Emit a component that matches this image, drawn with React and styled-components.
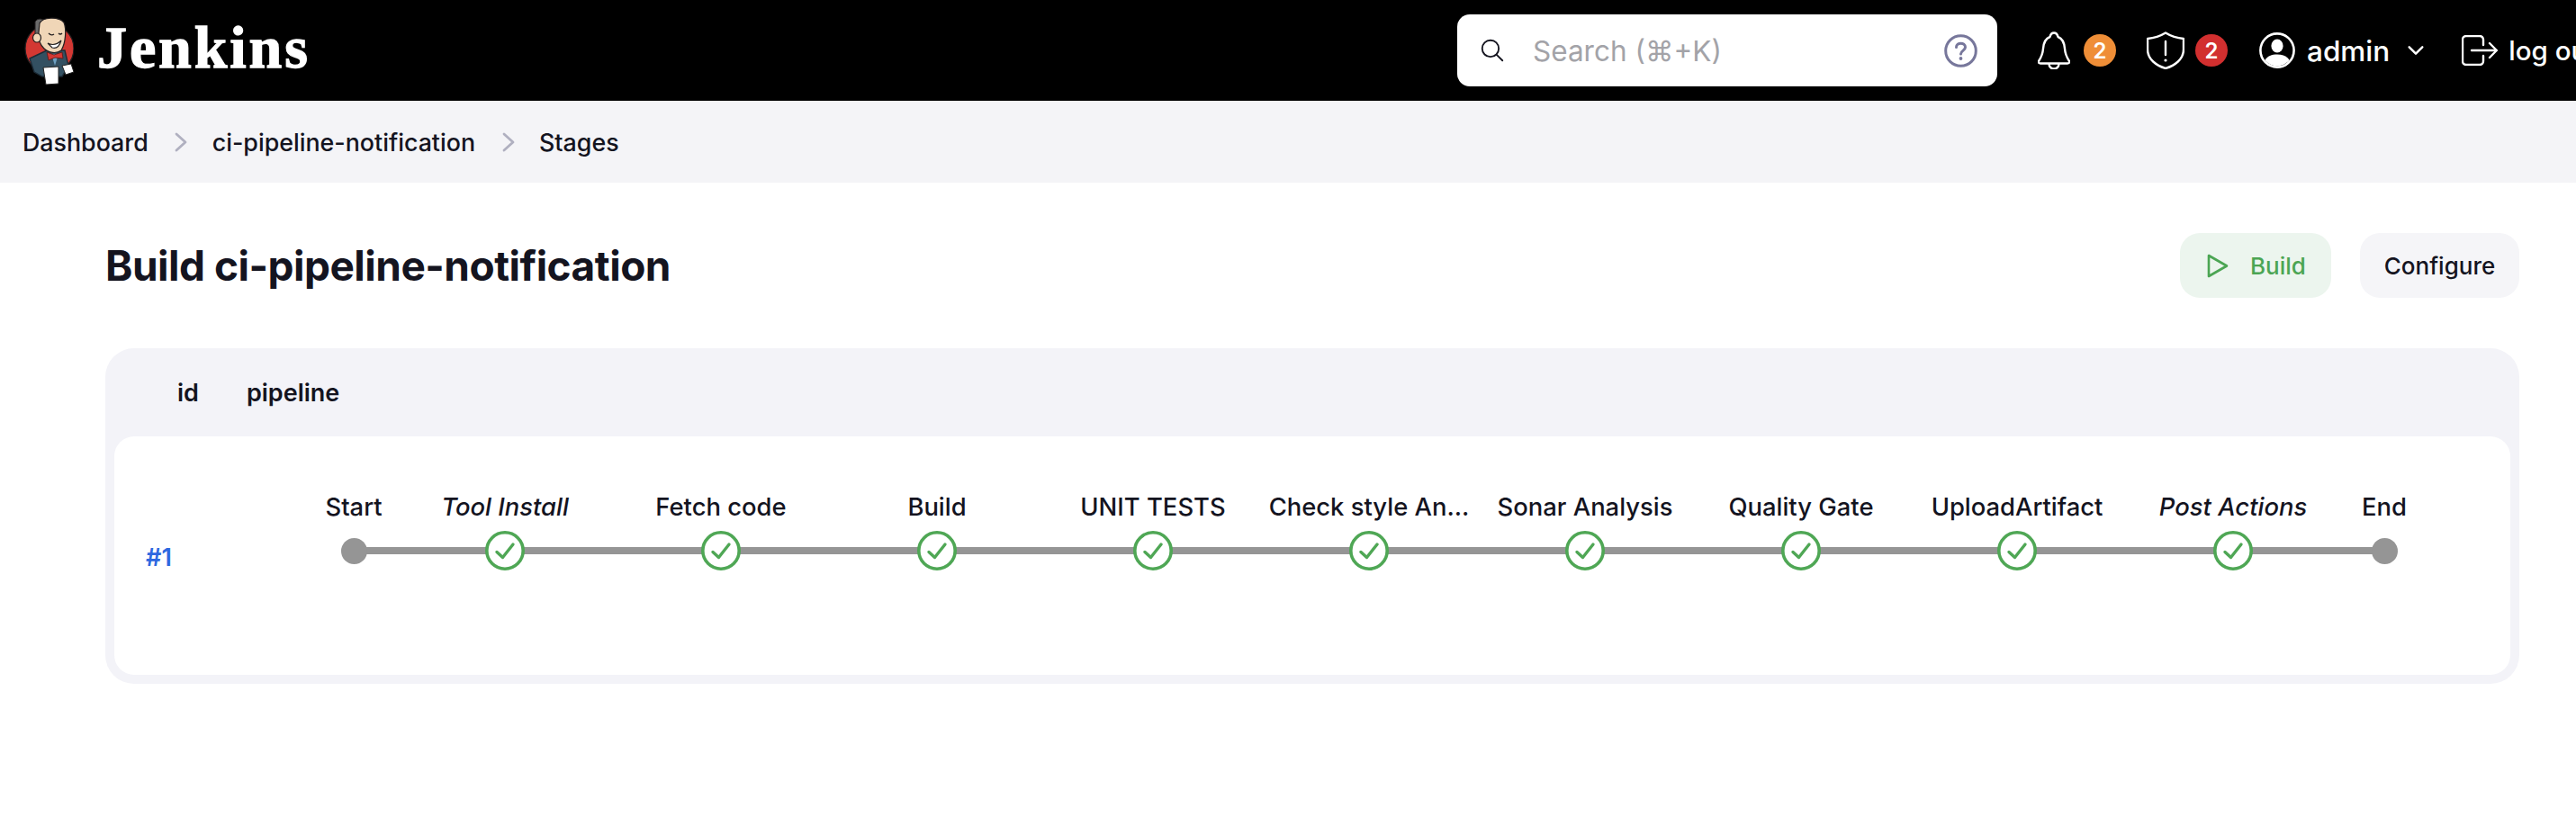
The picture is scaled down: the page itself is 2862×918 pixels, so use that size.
import React from "react";
import styled, { createGlobalStyle } from "styled-components";
import { IoSearchOutline, IoChevronDownOutline } from "react-icons/io5";

const GlobalStyle = createGlobalStyle`
  html, body {
    margin: 0;
    padding: 0;
    background: #fff;
    overflow: hidden;
  }
  body {
    font-family: Inter, "Noto Sans", sans-serif;
    color: #14141f;
  }
  * {
    box-sizing: border-box;
  }
`;

const Page = styled.div`
  width: 2862px;
  height: 918px;
  overflow: hidden;
`;

const Header = styled.header`
  height: 112px;
  background: #000;
  display: flex;
  align-items: center;
  padding-left: 27px;
  color: #fff;
  white-space: nowrap;
`;

const Brand = styled.div`
  display: flex;
  align-items: center;
  gap: 26px;
  width: 311px;
  flex-shrink: 0;
  svg {
    flex-shrink: 0;
  }
`;

const Wordmark = styled.span`
  font-family: "Liberation Serif", serif;
  font-weight: 700;
  font-size: 66px;
  line-height: 1;
  letter-spacing: 2.9px;
  -webkit-text-stroke: 1.3px #fff;
  margin-bottom: 6px;
`;

const SearchBox = styled.div`
  margin-left: 1281px;
  width: 600px;
  height: 80px;
  flex-shrink: 0;
  background: #fff;
  border-radius: 14px;
  display: flex;
  align-items: center;
  padding: 0 22px 0 24px;
  color: #14141f;
  svg {
    flex-shrink: 0;
  }
`;

const SearchHint = styled.span`
  margin-left: 30px;
  flex: 1;
  font-size: 31.5px;
  color: #a3a3a8;
`;

const HeaderActions = styled.div`
  display: flex;
  align-items: center;
  margin-left: 45px;
  flex-shrink: 0;
`;

const Action = styled.div`
  display: flex;
  align-items: center;
  gap: ${(p) => p.$gap || 13}px;
  margin-right: ${(p) => p.$after || 0}px;
  font-size: ${(p) => p.$size || 31.5}px;
  font-weight: 500;
`;

const Badge = styled.span`
  width: 36px;
  height: 36px;
  border-radius: 50%;
  background: ${(p) => p.$bg};
  color: #fff;
  font-size: 24px;
  font-weight: 600;
  display: flex;
  align-items: center;
  justify-content: center;
`;

const Caret = styled(IoChevronDownOutline)`
  margin-left: 3px;
`;

const Breadcrumbs = styled.nav`
  height: 91px;
  background: #f4f4f7;
  display: flex;
  align-items: center;
  padding-left: 25px;
  font-size: 26.8px;
  font-weight: 500;
  color: #14141f;
`;

const Separator = styled.svg`
  width: 14px;
  height: 22px;
  margin: 0 27.5px 0 29.5px;
  fill: none;
  stroke: #b0b0c0;
  stroke-width: 2.8;
  stroke-linecap: round;
  stroke-linejoin: round;
`;

const Main = styled.main`
  padding: 56px 63px 0 117px;
`;

const TitleRow = styled.div`
  display: flex;
  align-items: center;
  justify-content: space-between;
  height: 72px;
  margin-bottom: 56px;
`;

const Title = styled.h1`
  margin: 0;
  font-size: 46px;
  font-weight: 700;
  letter-spacing: -0.5px;
`;

const Buttons = styled.div`
  display: flex;
  gap: 32px;
`;

const Button = styled.button`
  height: 72px;
  width: ${(p) => p.$width}px;
  border: 0;
  border-radius: 22px;
  background: ${(p) => (p.$green ? "#ecf5ee" : "#f5f5f8")};
  color: ${(p) => (p.$green ? "#4ba553" : "#14141f")};
  font-family: inherit;
  font-size: 26px;
  font-weight: 500;
  display: flex;
  align-items: center;
  justify-content: center;
  gap: 24px;
  padding: 0 0 0 ${(p) => (p.$green ? 2 : 0)}px;
`;

const Table = styled.section`
  height: 373px;
  background: #f3f3f8;
  border-radius: 32px;
  padding: 0 10px 10px;
`;

const TableHead = styled.div`
  height: 98px;
  display: flex;
  align-items: center;
  padding-left: 70px;
  gap: 53px;
  font-size: 27px;
  font-weight: 600;
`;

const TableBody = styled.div`
  height: 265px;
  background: #fff;
  border-radius: 22px;
  display: flex;
`;

const IdCell = styled.a`
  width: 218px;
  padding: 118px 0 0 35px;
  font-size: 27px;
  font-weight: 600;
  color: #2e68e0;
  text-decoration: none;
  flex-shrink: 0;
`;

const Stages = styled.div`
  display: flex;
  padding-top: 60px;
  position: relative;
  height: max-content;
`;

const Rail = styled.div`
  position: absolute;
  left: 48px;
  right: 48px;
  top: 123px;
  height: 8px;
  background: #959595;
`;

const Stage = styled.div`
  width: ${(p) => (p.$end ? 96 : 240)}px;
  display: flex;
  flex-direction: column;
  align-items: center;
  position: relative;
  z-index: 1;
`;

const StageName = styled.span`
  height: 36px;
  line-height: 36px;
  font-size: 27.4px;
  font-weight: 500;
  font-style: ${(p) => (p.$italic ? "italic" : "normal")};
  white-space: nowrap;
  margin-bottom: 9px;
`;

const NodeSlot = styled.div`
  height: 44px;
  display: flex;
  align-items: center;
  justify-content: center;
`;

const Dot = styled.div`
  width: 29px;
  height: 29px;
  border-radius: 50%;
  background: #959595;
`;

const stages = [
  { name: "Start", end: true },
  { name: "Tool Install", italic: true },
  { name: "Fetch code" },
  { name: "Build" },
  { name: "UNIT TESTS" },
  { name: "Check style An..." },
  { name: "Sonar Analysis" },
  { name: "Quality Gate" },
  { name: "UploadArtifact" },
  { name: "Post Actions", italic: true },
  { name: "End", end: true },
];

const JenkinsLogo = () => (
  <svg width="55" height="77" viewBox="0 0 55 77">
    <circle cx="28" cy="36" r="27" fill="#d33833" stroke="#231f20" strokeWidth="1.2" />
    <path d="M6 47 L25 38 L45 38 L49 55 L42 67 L20 67 L11 62 Z" fill="#335061" stroke="#1c2b36" strokeWidth="1.4" />
    <path d="M30 42 L38 42 L34 55 Z" fill="#6d9fc0" />
    <path d="M25 40 L33 43 L42 40 L43 47 L34 46 L27 49 Z" fill="#d33833" stroke="#5b1512" strokeWidth="0.8" />
    <path d="M12 6 C15 2 19 3 21 4 L18 22 L12 22 Z" fill="#6b6b6b" stroke="#231f20" strokeWidth="1" />
    <path d="M17 8 C20 1 38 0 44 7 C47 14 46 30 41 38 C36 42 27 41 22 36 C18 32 15 26 16 18 Z" fill="#f0d6b7" stroke="#231f20" strokeWidth="1.2" />
    <ellipse cx="14" cy="24" rx="4.5" ry="5" fill="#f0d6b7" stroke="#231f20" strokeWidth="1.2" />
    <path d="M27 19 Q30 22 33 20" fill="none" stroke="#231f20" strokeWidth="1.3" />
    <path d="M38 19 Q40 21 42 19" fill="none" stroke="#231f20" strokeWidth="1.3" />
    <path d="M26 30 Q34 34 41 27 Q38 37 31 35 Z" fill="#fff" stroke="#231f20" strokeWidth="1.1" />
    <path d="M21 57 L38 56 L38 75 L24 76 Z" fill="#fff" stroke="#222" strokeWidth="1" />
    <path d="M42 55 L52 53 L55 62 L46 65 Z" fill="#fff" stroke="#222" strokeWidth="1" />
  </svg>
);

const HelpIcon = () => (
  <svg width="37" height="37" viewBox="0 0 37 37" fill="none" stroke="#77779b" strokeWidth="3">
    <circle cx="18.5" cy="18.5" r="16.8" />
    <path d="M13.5 14.5 C13.5 8.8 23.5 8.8 23.5 14.5 C23.5 18 18.5 18.2 18.5 22" strokeLinecap="round" />
    <circle cx="18.5" cy="27" r="1.9" fill="#77779b" stroke="none" />
  </svg>
);

const BellIcon = () => (
  <svg width="36" height="42" viewBox="0 0 36 42" fill="none" stroke="#fff" strokeWidth="2.4" strokeLinejoin="round">
    <path d="M18 1.5 C21 1.5 22 4 22.5 6 C28 8 29.5 13 30 19 C30.5 26 33 30 35 33 Q35.5 35.5 33 35.5 L3 35.5 Q.5 35.5 1 33 C3 30 5.5 26 6 19 C6.5 13 8 8 13.5 6 C14 4 15 1.5 18 1.5 Z" />
    <path d="M12.5 36 a5.5 5.5 0 0 0 11 0" />
  </svg>
);

const ShieldIcon = () => (
  <svg width="42" height="42" viewBox="0 0 42 42" fill="none" stroke="#fff" strokeWidth="2.4" strokeLinejoin="round">
    <path d="M21 1.5 Q30 7 41 8 V20 C41 31 31 38 21 41 C11 38 1 31 1 20 V8 Q12 7 21 1.5 Z" />
    <path d="M21 11 V26" strokeLinecap="round" />
    <circle cx="21" cy="32" r="1.6" fill="#fff" stroke="none" />
  </svg>
);

const UserIcon = () => (
  <svg width="40" height="40" viewBox="0 0 40 40">
    <circle cx="20" cy="20" r="18.6" fill="none" stroke="#fff" strokeWidth="2.6" />
    <ellipse cx="20" cy="15" rx="6.6" ry="7.4" fill="#fff" />
    <path d="M6.5 31 C9 26 14 24.5 20 24.5 C26 24.5 31 26 33.5 31 C30 35 25 37.5 20 37.5 C15 37.5 10 35 6.5 31 Z" fill="#fff" />
  </svg>
);

const LogoutIcon = () => (
  <svg width="40" height="34" viewBox="0 0 40 34" fill="none" stroke="#fff" strokeWidth="2.4" strokeLinecap="round" strokeLinejoin="round">
    <path d="M24 11 V5 a4 4 0 0 0 -4 -4 H5 a4 4 0 0 0 -4 4 V29 a4 4 0 0 0 4 4 H20 a4 4 0 0 0 4 -4 V23" />
    <path d="M11 17 H38.5" />
    <path d="M31 9 L38.8 17 L31 25" />
  </svg>
);

const PlayIcon = () => (
  <svg width="24" height="27" viewBox="0 0 24 27" fill="none" stroke="currentColor" strokeWidth="2.6" strokeLinejoin="round">
    <path d="M2 2 L22 13.5 L2 25 Z" />
  </svg>
);

const CheckNode = () => (
  <svg width="44" height="44" viewBox="0 0 44 44" fill="#fff">
    <circle cx="22" cy="22" r="20.2" stroke="#4fa755" strokeWidth="3.6" />
    <path d="M13 23.5 L19.5 29.5 L31 15" fill="none" stroke="#4fa755" strokeWidth="3.4" strokeLinecap="round" strokeLinejoin="round" />
  </svg>
);

const Chevron = () => (
  <Separator viewBox="0 0 14 22">
    <path d="M2 2 L12 11 L2 20" />
  </Separator>
);

const App = () => {
  return (
    <Page>
      <GlobalStyle />
      <Header>
        <Brand>
          <JenkinsLogo />
          <Wordmark>Jenkins</Wordmark>
        </Brand>
        <SearchBox>
          <IoSearchOutline size={30} />
          <SearchHint>Search (⌘+K)</SearchHint>
          <HelpIcon />
        </SearchBox>
        <HeaderActions>
          <Action $gap={15} $after={34}>
            <BellIcon />
            <Badge $bg="#ef8e37">2</Badge>
          </Action>
          <Action $gap={12} $after={35}>
            <ShieldIcon />
            <Badge $bg="#d22f2f">2</Badge>
          </Action>
          <Action $gap={13} $after={38}>
            <UserIcon />
            admin
            <Caret size={26} />
          </Action>
          <Action $gap={12} $size={29.5}>
            <LogoutIcon />
            log out
          </Action>
        </HeaderActions>
      </Header>
      <Breadcrumbs>
        Dashboard
        <Chevron />
        ci-pipeline-notification
        <Chevron />
        Stages
      </Breadcrumbs>
      <Main>
        <TitleRow>
          <Title>Build ci-pipeline-notification</Title>
          <Buttons>
            <Button $green $width={168}>
              <PlayIcon />
              Build
            </Button>
            <Button $width={177}>Configure</Button>
          </Buttons>
        </TitleRow>
        <Table>
          <TableHead>
            <span>id</span>
            <span>pipeline</span>
          </TableHead>
          <TableBody>
            <IdCell href="#">#1</IdCell>
            <Stages>
              <Rail />
              {stages.map((s) => (
                <Stage key={s.name} $end={s.end}>
                  <StageName $italic={s.italic}>{s.name}</StageName>
                  <NodeSlot>{s.end ? <Dot /> : <CheckNode />}</NodeSlot>
                </Stage>
              ))}
            </Stages>
          </TableBody>
        </Table>
      </Main>
    </Page>
  );
};

export default App;
